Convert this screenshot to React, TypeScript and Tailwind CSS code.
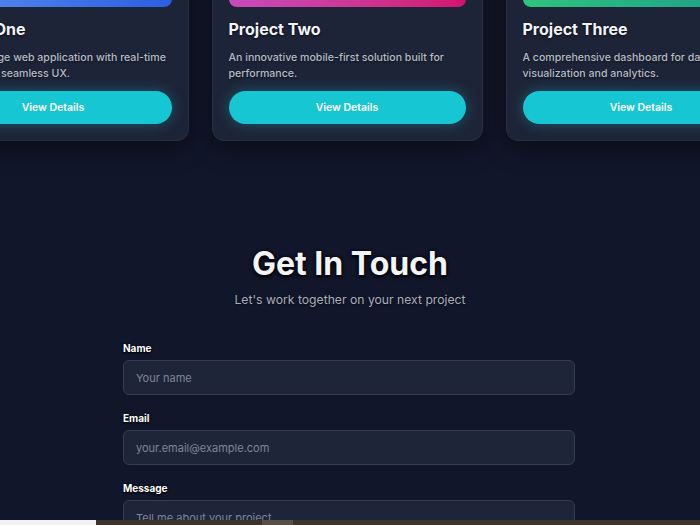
import type { ReactNode } from "react";

type Project = { title: string; desc: string; bar: string };

const projects: Project[] = [
  {
    title: "Project One",
    desc: "A cutting-edge web application with real-time features and seamless UX.",
    bar: "bg-gradient-to-r from-[#5b8cf0] to-[#2c5ee0]",
  },
  {
    title: "Project Two",
    desc: "An innovative mobile-first solution built for performance.",
    bar: "bg-gradient-to-r from-[#c64bbd] to-[#d2126f]",
  },
  {
    title: "Project Three",
    desc: "A comprehensive dashboard for data visualization and analytics.",
    bar: "bg-gradient-to-r from-[#2fc47d] to-[#1f9a88]",
  },
];

function ProjectCard({ p }: { p: Project }) {
  return (
    <div className="flex flex-col rounded-xl border border-[#293045] bg-[#1e2437] p-4 shadow-[0_8px_24px_rgba(0,0,0,0.45)]">
      <div className={`h-32 rounded-lg ${p.bar}`} />
      <h3 className="mt-2 text-[16px] font-bold leading-7 text-[#f1f3f8] [text-shadow:0_1px_3px_rgba(0,0,0,0.7)]">
        {p.title}
      </h3>
      <p className="mt-[7px] min-h-8 text-[10.6px] font-medium leading-4 text-[#b6bbc7] [text-shadow:0_1px_2px_rgba(0,0,0,0.5)]">
        {p.desc}
      </p>
      <button className="mt-[9px] h-[33px] w-full rounded-full bg-[#17c6d3] text-[10.5px] font-semibold text-white shadow-[0_0_14px_rgba(23,198,211,0.35)]">
        View Details
      </button>
    </div>
  );
}

function Field({ label, children }: { label: string; children: ReactNode }) {
  return (
    <div className="flex flex-col">
      <label className="mb-1 text-[10px] font-bold leading-4 text-white [text-shadow:0_0_2px_#000,0_1px_2px_#000]">
        {label}
      </label>
      {children}
    </div>
  );
}

const inputCls =
  "h-[35px] w-full rounded-md border border-[#363d51] bg-[#1f2538] px-3 text-[11px] text-white placeholder:text-[#7e8597] outline-none";

export default function App() {
  return (
    <div className="relative h-[525px] overflow-hidden bg-[#11162a] font-['Inter',sans-serif]">
      <section className="-mt-[138px] flex justify-center">
        <div className="grid w-[859px] shrink-0 -translate-x-[3px] grid-cols-3 gap-[23px]">
          {projects.map((p) => (
            <ProjectCard key={p.title} p={p} />
          ))}
        </div>
      </section>

      <section className="mt-[105px] flex flex-col items-center">
        <h2 className="text-[32px] font-bold leading-9 text-[#f3f4f8] [text-shadow:0_0_3px_#000,0_2px_4px_#000]">
          Get In Touch
        </h2>
        <p className="mt-2 text-[12.2px] leading-5 text-[#a9aebb] [text-shadow:0_1px_2px_rgba(0,0,0,0.6)]">
          Let's work together on your next project
        </p>

        <form className="mt-[30px] flex w-[452px] -translate-x-[1px] flex-col gap-[15px]">
          <Field label="Name">
            <input className={inputCls} placeholder="Your name" />
          </Field>
          <Field label="Email">
            <input className={inputCls} placeholder="your.email@example.com" />
          </Field>
          <Field label="Message">
            <textarea
              className="h-28 w-full resize-none rounded-md border border-[#363d51] bg-[#1f2538] px-3 py-[9px] text-[11px] text-white placeholder:text-[#7e8597] outline-none"
              placeholder="Tell me about your project"
            />
          </Field>
        </form>
      </section>

      <div className="absolute inset-x-0 bottom-0 flex h-[5px]">
        <div className="w-[96px] bg-[#f2f2f2]" />
        <div className="w-[166px] bg-[#3b332d]" />
        <div className="w-[31px] bg-[#57504a]" />
        <div className="flex-1 bg-[#3b342f]" />
      </div>
    </div>
  );
}
